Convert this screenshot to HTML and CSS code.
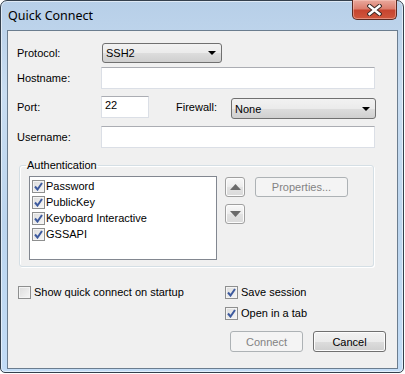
FILE: index.html
```html
<!DOCTYPE html>
<html>
<head>
  <title>Quick Connect</title>
  <link rel="stylesheet" href="styles.css">
</head>
<body>
  <div class="window">
    <div class="titlebar">
      <span class="title">Quick Connect</span>
      <div class="close">
        <svg width="15" height="12" viewBox="0 0 15 12">
          <path d="M2.5 2 L12.5 10 M12.5 2 L2.5 10" stroke="#3b2a26" stroke-width="4.4" stroke-linecap="square"/>
          <path d="M2.5 2 L12.5 10 M12.5 2 L2.5 10" stroke="#ffffff" stroke-width="2.4" stroke-linecap="square"/>
        </svg>
      </div>
    </div>

    <div class="client">
      <div class="row row-protocol">
        <label class="lbl">Protocol:</label>
        <div class="combo combo-protocol"><span>SSH2</span><i class="caret"></i></div>
      </div>
      <div class="row row-host">
        <label class="lbl">Hostname:</label>
        <div class="textbox textbox-wide"></div>
      </div>
      <div class="row row-port">
        <label class="lbl">Port:</label>
        <div class="textbox textbox-port">22</div>
        <label class="lbl lbl-firewall">Firewall:</label>
        <div class="combo combo-firewall"><span>None</span><i class="caret"></i></div>
      </div>
      <div class="row row-user">
        <label class="lbl">Username:</label>
        <div class="textbox textbox-wide"></div>
      </div>

      <fieldset class="group">
        <legend>Authentication</legend>
        <div class="listbox">
          <div class="item"><span class="cb checked"><svg width="9" height="9" viewBox="0 0 9 9"><path d="M1 4.5 L3.5 7.5 L8 1" fill="none" stroke="#3d5a9e" stroke-width="2"/></svg></span>Password</div>
          <div class="item"><span class="cb checked"><svg width="9" height="9" viewBox="0 0 9 9"><path d="M1 4.5 L3.5 7.5 L8 1" fill="none" stroke="#3d5a9e" stroke-width="2"/></svg></span>PublicKey</div>
          <div class="item"><span class="cb checked"><svg width="9" height="9" viewBox="0 0 9 9"><path d="M1 4.5 L3.5 7.5 L8 1" fill="none" stroke="#3d5a9e" stroke-width="2"/></svg></span>Keyboard Interactive</div>
          <div class="item"><span class="cb checked"><svg width="9" height="9" viewBox="0 0 9 9"><path d="M1 4.5 L3.5 7.5 L8 1" fill="none" stroke="#3d5a9e" stroke-width="2"/></svg></span>GSSAPI</div>
        </div>
        <div class="arrows">
          <div class="btn arrow-btn"><svg width="11" height="6" viewBox="0 0 11 6"><path d="M0 6 L5.5 0 L11 6 Z" fill="#6b6b6b"/></svg></div>
          <div class="btn arrow-btn"><svg width="11" height="6" viewBox="0 0 11 6"><path d="M0 0 L5.5 6 L11 0 Z" fill="#6b6b6b"/></svg></div>
        </div>
        <div class="btn btn-disabled btn-props">Properties...</div>
      </fieldset>

      <div class="options">
        <div class="check"><span class="cb"></span>Show quick connect on startup</div>
        <div class="check"><span class="cb checked"><svg width="9" height="9" viewBox="0 0 9 9"><path d="M1 4.5 L3.5 7.5 L8 1" fill="none" stroke="#3d5a9e" stroke-width="2"/></svg></span>Save session</div>
        <div></div>
        <div class="check"><span class="cb checked"><svg width="9" height="9" viewBox="0 0 9 9"><path d="M1 4.5 L3.5 7.5 L8 1" fill="none" stroke="#3d5a9e" stroke-width="2"/></svg></span>Open in a tab</div>
      </div>

      <div class="actions">
        <div class="btn btn-disabled btn-action">Connect</div>
        <div class="btn btn-action">Cancel</div>
      </div>
    </div>
  </div>
</body>
</html>
```

FILE: styles.css
```css
body {
  margin: 0;
  background: #ffffff;
  font-family: "Liberation Sans", Arial, sans-serif;
  font-size: 11px;
  color: #000;
}
.window {
  width: 404px;
  height: 373px;
  box-sizing: border-box;
  padding: 0 5px 3px 6px;
  border: 1px solid #34404d;
  border-radius: 7px 7px 5px 5px;
  background: linear-gradient(to bottom, #b7cfe8 0%, #c9ddf1 25%, #bcd5ee 60%, #c2dcf6 100%);
  box-shadow: inset 0 0 0 1px rgba(255,255,255,0.55);
}
.titlebar {
  display: flex;
  align-items: flex-start;
  height: 29px;
  padding-left: 1px;
}
.title {
  font-family: "Noto Sans", sans-serif;
  font-size: 12.5px;
  color: #000;
  margin-top: 6px;
}
.close {
  margin-left: auto;
  margin-right: 1px;
  margin-top: -1px;
  width: 45px;
  height: 20px;
  box-sizing: border-box;
  border: 1px solid #5b2a22;
  border-top: none;
  border-radius: 0 0 5px 5px;
  background: linear-gradient(to bottom, #e9a99d 0%, #dc7f6f 45%, #c7452f 55%, #d0573d 100%);
  box-shadow: inset 0 0 0 1px rgba(255,210,200,0.45);
  display: flex;
  align-items: center;
  justify-content: center;
}
.client {
  height: 339px;
  box-sizing: border-box;
  border: 1px solid #6b7d8f;
  background: #f0f0f0;
  padding: 12px 0 0 9px;
}
.row {
  display: flex;
  align-items: center;
}
.row-protocol { height: 20px; margin-bottom: 4px; }
.row-host { height: 22px; margin-bottom: 7px; }
.row-port { height: 22px; margin-bottom: 8px; }
.row-user { height: 22px; }
.lbl {
  width: 84px;
  flex-shrink: 0;
}
.lbl-firewall {
  width: 55px;
  margin-left: 27px;
}
.textbox {
  height: 22px;
  box-sizing: border-box;
  background: #fff;
  border: 1px solid #dbdfe6;
  border-top-color: #abadb3;
  padding: 2px 3px;
}
.textbox-wide { width: 274px; }
.textbox-port { width: 48px; align-self: flex-start; }
.combo {
  display: flex;
  align-items: center;
  box-sizing: border-box;
  border: 1px solid #707070;
  border-radius: 3px;
  background: linear-gradient(to bottom, #f2f2f2 0%, #ebebeb 50%, #dddddd 51%, #cfcfcf 100%);
  padding: 0 5px 0 3px;
}
.combo span { flex: 1; }
.combo-protocol { width: 120px; height: 20px; margin-left: 1px; }
.combo-firewall { width: 145px; height: 21px; margin-top: 3px; }
.caret {
  width: 0;
  height: 0;
  border-left: 4px solid transparent;
  border-right: 4px solid transparent;
  border-top: 4px solid #000;
}
.group {
  width: 355px;
  box-sizing: border-box;
  margin: 11px 0 0 2px;
  padding: 4px 0 6px 9px;
  border: 1px solid #d5dfe5;
  border-radius: 3px;
  box-shadow: inset 1px 1px 0 #fff, 1px 1px 0 #fff;
  display: flex;
  align-items: flex-start;
}
.group legend {
  padding: 0 1px;
  margin-left: -3px;
  line-height: 13px;
}
.listbox {
  width: 188px;
  height: 84px;
  box-sizing: border-box;
  border: 1px solid #828790;
  background: #fff;
  padding: 1px 2px;
}
.item, .check {
  display: flex;
  align-items: center;
  height: 16px;
  white-space: nowrap;
}
.cb {
  width: 13px;
  height: 13px;
  box-sizing: border-box;
  border: 1px solid #8e8f8f;
  background: linear-gradient(135deg, #dcdcdc 0%, #f6f6f6 100%);
  box-shadow: inset 0 0 0 1px #f4f4f4;
  margin-right: 1px;
  flex-shrink: 0;
  display: flex;
  align-items: center;
  justify-content: center;
}
.check .cb { margin-right: 3px; }
.btn {
  box-sizing: border-box;
  border: 1px solid #707070;
  border-radius: 3px;
  background: linear-gradient(to bottom, #f2f2f2 0%, #ebebeb 50%, #dddddd 51%, #cfcfcf 100%);
  box-shadow: inset 0 0 0 1px #fcfcfc;
  display: flex;
  align-items: center;
  justify-content: center;
}
.btn-disabled {
  border-color: #adb2b5;
  background: #f4f4f4;
  color: #838383;
  box-shadow: none;
}
.arrows {
  display: flex;
  flex-direction: column;
  gap: 7px;
  margin: 1px 0 0 8px;
}
.arrow-btn {
  width: 20px;
  height: 20px;
  border-color: #a0a0a0;
  background: linear-gradient(to bottom, #f8f8f8 0%, #ececec 50%, #e2e2e2 51%, #dadada 100%);
}
.btn-props {
  width: 93px;
  height: 20px;
  margin: 1px 0 0 10px;
}
.options {
  display: grid;
  grid-template-columns: 207px auto;
  row-gap: 5px;
  margin: 17px 0 0 1px;
}
.actions {
  display: flex;
  justify-content: flex-end;
  gap: 10px;
  margin: 10px 11px 0 0;
}
.btn-action {
  width: 73px;
  height: 21px;
}
```
